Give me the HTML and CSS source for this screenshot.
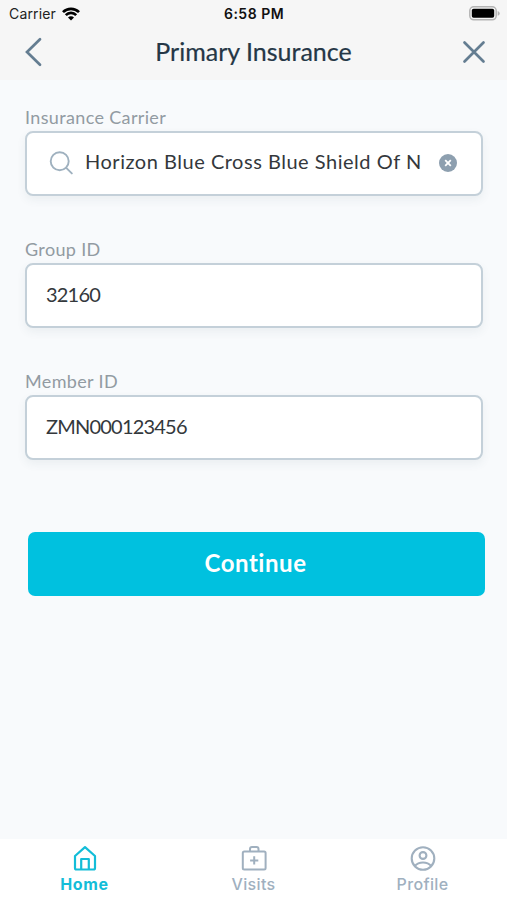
FILE: index.html
```html
<!DOCTYPE html>
<html lang="en">
<head>
<meta charset="utf-8">
<title>Primary Insurance</title>
<link rel="stylesheet" href="styles.css">
</head>
<body>
<div class="screen">
  <header class="header">
    <div class="status">
      <div class="status-left">
        <span class="carrier">Carrier</span>
        <svg class="wifi" width="18" height="14" viewBox="0 0 18 14" fill="none" stroke="#000" stroke-width="2.7"><path d="M1 5.1a11.3 11.3 0 0 1 16 0M3.8 8.1a7.3 7.3 0 0 1 10.4 0"/><path d="M9 13.6 6 10.5a4.2 4.2 0 0 1 6 0z" fill="#000" stroke="none"/></svg>
      </div>
      <span class="time">6:58 PM</span>
      <svg class="battery" width="31" height="15" viewBox="0 0 31 15"><rect x=".8" y=".8" width="26.4" height="13" rx="4" fill="#f6f6f6" stroke="#b4b4b4" stroke-width="1.5"/><rect x="2.8" y="2.8" width="22.4" height="9" rx="1.8" fill="#000"/><path d="M28.7 5v4.8q2-.7 2-2.4t-2-2.4z" fill="#b4b4b4"/></svg>
    </div>
    <div class="nav">
      <svg width="18" height="30" viewBox="0 0 18 30" fill="none" stroke="#647d91" stroke-width="2.7" stroke-linecap="round"><path d="M15 2.200 2 15l13 12.800"/></svg>
      <h1 class="title">Primary Insurance</h1>
      <svg width="24" height="24" viewBox="0 0 24 24" fill="none" stroke="#647d91" stroke-width="2.7" stroke-linecap="round"><path d="m2.500 2.500 19 19M21.500 2.500l-19 19"/></svg>
    </div>
  </header>
  <main class="form">
    <div class="field">
      <span class="label label-carrier">Insurance Carrier</span>
      <div class="box box-search">
        <svg class="search" width="24" height="24" viewBox="0 0 24 24" fill="none" stroke="#9fb1bf" stroke-width="1.900" stroke-linecap="round"><circle cx="10.700" cy="10.200" r="9"/><path d="m17.200 16.800 5.600 5.600"/></svg>
        <span class="value value-carrier">Horizon Blue Cross Blue Shield Of N</span>
        <svg class="clear" width="18" height="18" viewBox="0 0 18 18"><circle cx="9" cy="9" r="9" fill="#8d9faf"/><path d="m6.200 6.200 5.600 5.600m0-5.600-5.600 5.600" stroke="#fff" stroke-width="1.800"/></svg>
      </div>
    </div>
    <div class="field">
      <span class="label">Group ID</span>
      <div class="box"><span class="value value-id">32160</span></div>
    </div>
    <div class="field">
      <span class="label">Member ID</span>
      <div class="box"><span class="value value-id">ZMN000123456</span></div>
    </div>
    <button class="continue">Continue</button>
  </main>
  <nav class="tabs">
    <div class="tab active">
      <svg width="26" height="26" viewBox="0 0 26 26" fill="none" stroke="currentColor" stroke-width="2.200" stroke-linejoin="round"><path d="M3 11 13 2.200 23 11v12a1.500 1.500 0 0 1-1.500 1.500h-17A1.500 1.500 0 0 1 3 23z"/><path d="M9.200 24V14h7.600v10"/></svg>
      <span>Home</span>
    </div>
    <div class="tab visits">
      <svg width="26" height="26" viewBox="0 0 26 26" fill="none" stroke="currentColor" stroke-width="2" stroke-linejoin="round"><rect x="1.800" y="6.500" width="22.800" height="18" rx="1.500"/><path d="M9 6.500V4a2 2 0 0 1 2-2h4.500a2 2 0 0 1 2 2v2.500M13.200 11.300v8.200M9.100 15.400h8.200"/></svg>
      <span>Visits</span>
    </div>
    <div class="tab profile">
      <svg width="26" height="26" viewBox="0 0 26 26" fill="none" stroke="currentColor" stroke-width="2.100"><circle cx="13" cy="13.500" r="11.300"/><circle cx="13" cy="10.500" r="3.400"/><path d="M4.800 21c4-4.600 12.400-4.600 16.400 0"/></svg>
      <span>Profile</span>
    </div>
  </nav>
</div>
</body>
</html>
```
FILE: styles.css
```css
* { box-sizing: border-box; }
body { margin: 0; font-family: Lato, sans-serif; background: #f8fafc; }
svg { display: block; flex: none; }
.screen { width: 507px; height: 900px; display: flex; flex-direction: column; background: #f8fafc; }
.header { height: 80px; background: #f6f6f6; }
.status { height: 27px; display: grid; grid-template-columns: 1fr auto 1fr; align-items: center; padding: 0 7px 0 9px; font: 14px/18px Inter, sans-serif; color: #222; }
.status-left { display: flex; align-items: center; gap: 6px; }
.carrier { letter-spacing: .15px; }
.time { font-weight: 600; color: #111; letter-spacing: .5px; margin-right: 1px; }
.battery { justify-self: end; }
.nav { height: 50px; display: flex; align-items: center; justify-content: space-between; padding: 0 21px 0 25px; }
.title { margin: 0; padding: 0 0 2px 2px; font-size: 25px; line-height: 30px; font-weight: 400; color: #253746; -webkit-text-stroke: .2px; }
.form { flex: 1; display: flex; flex-direction: column; padding: 26px 22px 0 25px; }
.field { height: 132px; width: 458px; }
.label { display: block; height: 25px; font-size: 18px; line-height: 22px; letter-spacing: .35px; color: #929ba2; white-space: nowrap; }
.box { height: 65px; display: flex; align-items: center; padding: 0 20px 4px 19px; background: #fff; border: 2px solid #c4d0d9; border-radius: 8px; box-shadow: 0 4px 10px rgba(60, 80, 100, .07); }
.box-search { padding: 0 24px 2px 22px; }
.value { font-size: 20px; line-height: 26px; color: #34383c; white-space: nowrap; }
.value-carrier { margin: 0 auto 3px 12px; letter-spacing: .52px; }
.value-id { letter-spacing: -.8px; }
.continue { margin: 30px 0 0 3px; width: 457px; height: 64px; flex: none; border: 0; border-radius: 7px; background: #00c1df; color: #fff; font: 700 24px/30px Lato, sans-serif; letter-spacing: .55px; padding: 0 2px 2px 0; }
.tabs { height: 61px; display: grid; grid-template-columns: repeat(3, 1fr); background: #fff; }
.tab { display: flex; flex-direction: column; align-items: center; padding-top: 6px; font: 500 16px/20px Inter, sans-serif; letter-spacing: .35px; color: #a0b0bf; }
.tab span { margin-top: 3px; }
.active { color: #13bdd8; }
.active span { font-weight: 700; letter-spacing: .7px; }
```
